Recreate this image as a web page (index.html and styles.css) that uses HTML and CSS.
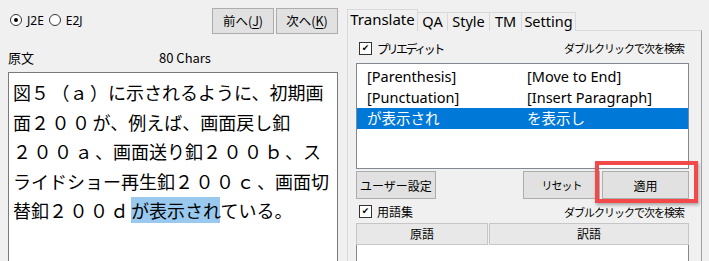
FILE: index.html
```html
<!DOCTYPE html>
<html lang="ja">
<head>
    <meta charset="UTF-8">
    <title>Translate</title>
    <link rel="stylesheet" href="styles.css">
</head>
<body>
<div class="app">
    <!-- 原文エリア -->
    <div class="source">
        <div class="toolbar">
            <label class="radio"><span class="dot on"></span>J2E</label>
            <label class="radio"><span class="dot"></span>E2J</label>
            <div class="nav">
                <button class="btn nav-btn">前へ(<u>J</u>)</button>
                <button class="btn nav-btn">次へ(<u>K</u>)</button>
            </div>
        </div>
        <div class="caption">
            <span class="cap-title">原文</span>
            <span class="cap-count">80 Chars</span>
        </div>
        <div class="textbox">
            <div class="line">図<span class="w">５</span>（<span class="w">ａ</span>）に示されるように、初期画</div>
            <div class="line">面<span class="w">２００</span>が、例えば、画面戻し釦</div>
            <div class="line"><span class="w">２００ａ</span>、画面送り釦<span class="w">２００ｂ</span>、ス</div>
            <div class="line">ライドショー再生釦<span class="w">２００ｃ</span>、画面切</div>
            <div class="line">替釦<span class="w">２００ｄ</span><span class="sel">が表示され</span>ている。</div>
        </div>
    </div>

    <!-- タブエリア -->
    <div class="tabs-area">
        <div class="tabs">
            <div class="tab active">Translate</div>
            <div class="tab t-qa">QA</div>
            <div class="tab t-style">Style</div>
            <div class="tab t-tm">TM</div>
            <div class="tab t-setting">Setting</div>
        </div>
        <div class="panel">
            <div class="row-head">
                <label class="check"><span class="box">&#10004;</span><span class="kana">プリエディット</span></label>
                <span class="hint">ダブルクリックで次を検索</span>
            </div>
            <div class="listbox">
                <div class="item"><span class="col1">[Parenthesis]</span><span>[Move to End]</span></div>
                <div class="item"><span class="col1">[Punctuation]</span><span>[Insert Paragraph]</span></div>
                <div class="item selected"><span class="col1">が表示され</span><span>を表示し</span></div>
            </div>
            <div class="actions">
                <button class="btn user-btn">ユーザー設定</button>
                <button class="btn reset-btn">リセット</button>
                <button class="btn apply-btn">適用</button>
                <span class="highlight"></span>
            </div>
            <div class="row-head gloss">
                <label class="check"><span class="box">&#10004;</span>用語集</label>
                <span class="hint">ダブルクリックで次を検索</span>
            </div>
            <div class="grid-head">
                <div class="gh gh1">原語</div>
                <div class="gh gh2">訳語</div>
            </div>
            <div class="grid-body"></div>
        </div>
    </div>
</div>
</body>
</html>
```

FILE: styles.css
```css
/* 全体 */
body {
    margin: 0;
    background-color: #f0f0f0;
    font-family: "Noto Sans", "Noto Sans CJK JP", sans-serif;
    font-size: 12px;
    color: #000;
    overflow: hidden;
}

.app {
    display: grid;
    grid-template-columns: 347px 355px;
    width: 709px;
    height: 261px;
    overflow: hidden;
}

/* 左側 */
.source {
    padding-left: 8px;
    padding-right: 9px;
}

.toolbar {
    display: flex;
    align-items: center;
    height: 42px;
    padding-left: 2px;
}

.radio {
    display: flex;
    align-items: center;
    gap: 5px;
    margin-right: 5px;
    font-size: 12px;
    position: relative;
    top: -1px;
}

.dot {
    width: 10px;
    height: 10px;
    border: 1px solid #333;
    border-radius: 50%;
    background: #fff;
    position: relative;
}

.dot.on::after {
    content: "";
    position: absolute;
    left: 3px;
    top: 3px;
    width: 4px;
    height: 4px;
    border-radius: 50%;
    background: #000;
}

.nav {
    margin-left: auto;
    display: flex;
    gap: 2px;
    margin-top: -1px;
}

.btn {
    background: #e1e1e1;
    border: 1px solid #adadad;
    font-family: "Noto Sans CJK JP", sans-serif;
    font-size: 12px;
    color: #000;
    padding: 0;
    margin: 0;
}

.nav-btn {
    width: 62px;
    height: 26px;
    font-size: 12.5px;
}

.nav-btn u {
    text-underline-offset: 2px;
}

.caption {
    display: flex;
    height: 30px;
    align-items: center;
    font-family: "Noto Sans CJK JP", sans-serif;
    font-size: 13px;
}

.cap-title {
    width: 151px;
}

.textbox {
    background: #fff;
    border: 1px solid #7a7a7a;
    height: 200px;
    padding: 5px 0 0 4px;
    font-family: "Noto Sans CJK JP", sans-serif;
    font-size: 18px;
    line-height: 29.5px;
    white-space: nowrap;
}

/* 全角英数字は少し広め */
.w {
    letter-spacing: 2.5px;
}

.sel {
    background: #99c9ef;
}

/* 右側タブ */
.tabs-area {
    padding-top: 9px;
}

.tabs {
    display: flex;
    align-items: flex-end;
    height: 22px;
    position: relative;
    z-index: 1;
}

.tab {
    box-sizing: border-box;
    height: 19px;
    border: 1px solid #d9d9d9;
    border-bottom: none;
    font-size: 14.5px;
    line-height: 17px;
    text-align: center;
    background: #f0f0f0;
}

.tab + .tab {
    margin-left: -1px;
}

.tab.active {
    width: 71px;
    height: 22px;
    line-height: 19px;
    font-size: 15px;
}

.t-qa {
    width: 31px;
}

.t-style {
    width: 43px;
}

.t-tm {
    width: 33px;
}

.t-setting {
    width: 55px;
}

.panel {
    border: 1px solid #d9d9d9;
    border-right-color: #a0a0a0;
    margin-top: -1px;
    height: 240px;
    padding: 0 12px 0 8px;
}

.row-head {
    display: flex;
    align-items: center;
    height: 30px;
    margin-top: 2px;
    font-family: "Noto Sans CJK JP", sans-serif;
}

.check {
    display: flex;
    align-items: center;
    gap: 5px;
    margin-left: 3px;
    font-size: 12px;
}

.kana {
    letter-spacing: -2.5px;
}

.box {
    width: 11px;
    height: 11px;
    border: 1px solid #333;
    background: #fff;
    font-size: 9px;
    line-height: 11px;
    text-align: center;
    font-family: "DejaVu Sans", sans-serif;
}

.hint {
    margin-left: auto;
    font-size: 11px;
    letter-spacing: -1px;
    margin-right: 5px;
}

.listbox {
    background: #fff;
    border: 1px solid #828790;
    height: 102px;
    padding-top: 2px;
}

.item {
    display: flex;
    height: 21px;
    line-height: 21px;
    font-size: 14.5px;
    padding-left: 10px;
    font-family: "Noto Sans", "Noto Sans CJK JP", sans-serif;
}

.col1 {
    width: 160px;
}

.item.selected {
    background: #0078d7;
    color: #fff;
}

.actions {
    display: flex;
    align-items: center;
    margin-top: 1px;
    height: 30px;
    position: relative;
}

.user-btn {
    width: 80px;
    height: 28px;
}

.reset-btn {
    width: 77px;
    height: 28px;
    margin-left: auto;
    font-size: 11px;
    letter-spacing: -1px;
}

.apply-btn {
    width: 87px;
    height: 28px;
    margin-left: 2px;
    font-size: 12px;
}

.highlight {
    position: absolute;
    right: -9px;
    top: -9px;
    width: 95px;
    height: 34px;
    border: 4px solid #f24a4a;
    box-shadow: 1px 2px 3px rgba(0, 0, 0, 0.3);
}

.gloss {
    height: 23px;
    margin-top: 0;
}

.grid-head {
    display: flex;
    height: 22px;
}

.gh {
    background: #e8e8e8;
    border: 1px solid #c6c6c6;
    text-align: center;
    line-height: 20px;
    font-family: "Noto Sans CJK JP", sans-serif;
    font-size: 12px;
}

.gh1 {
    width: 130px;
}

.gh2 {
    flex: 1;
    margin-left: 1px;
}

.grid-body {
    background: #fff;
    border: 1px solid #828790;
    border-top: none;
    height: 30px;
}
```
